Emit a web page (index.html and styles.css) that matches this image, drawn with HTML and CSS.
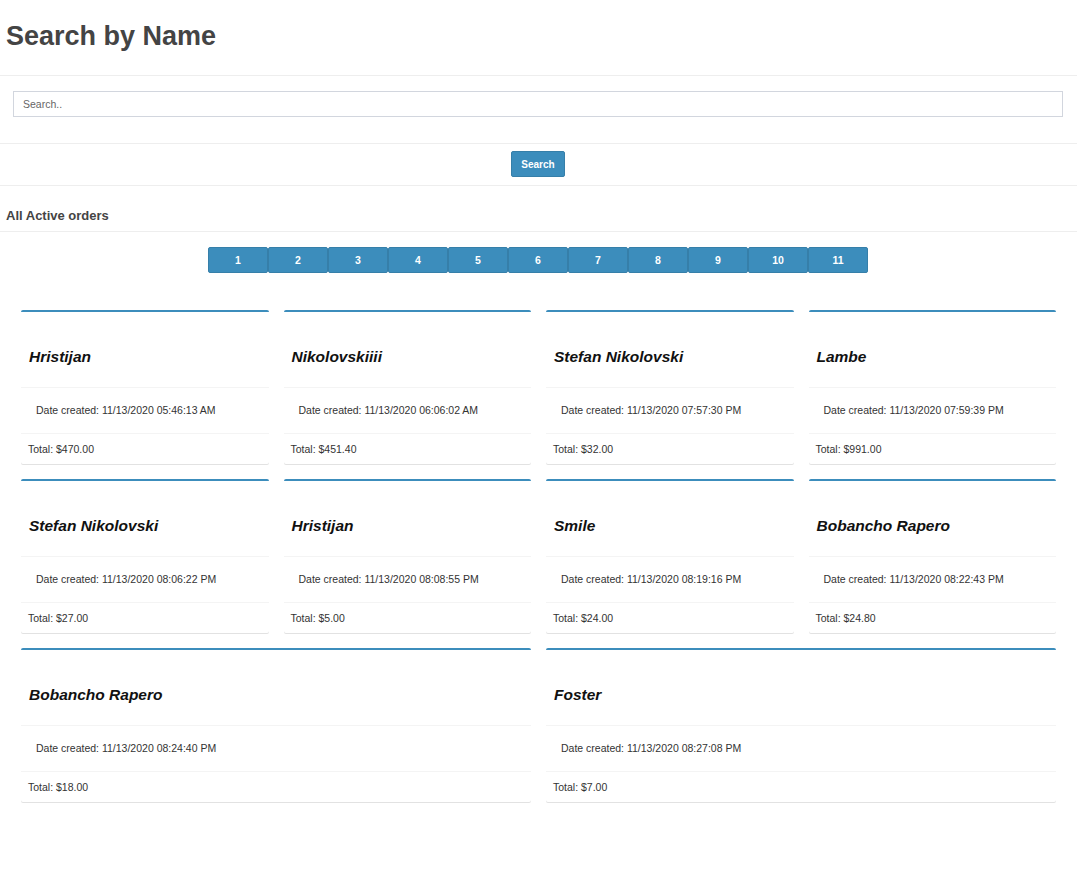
FILE: index.html
```html
<!DOCTYPE html>
<html lang="en">
<head>
<meta charset="utf-8">
<title>Search by Name</title>
<link rel="stylesheet" href="styles.css">
</head>
<body>
  <header class="page-head">
    <h1 class="page-title">Search by Name</h1>
  </header>
  <section class="search-row">
    <input class="search-input" type="text" placeholder="Search..">
  </section>
  <section class="button-row">
    <button class="btn-search" type="button">Search</button>
  </section>
  <section class="list-head">
    <h3 class="list-title">All Active orders</h3>
  </section>
  <nav class="pager">
    <button class="page-btn">1</button><button class="page-btn">2</button><button class="page-btn">3</button><button class="page-btn">4</button><button class="page-btn">5</button><button class="page-btn">6</button><button class="page-btn">7</button><button class="page-btn">8</button><button class="page-btn">9</button><button class="page-btn">10</button><button class="page-btn">11</button>
  </nav>
  <main class="cards">
    <div class="card"><div class="card-name">Hristijan</div><div class="card-date">Date created: 11/13/2020 05:46:13 AM</div><div class="card-total">Total: $470.00</div></div>
    <div class="card"><div class="card-name">Nikolovskiiii</div><div class="card-date">Date created: 11/13/2020 06:06:02 AM</div><div class="card-total">Total: $451.40</div></div>
    <div class="card"><div class="card-name">Stefan Nikolovski</div><div class="card-date">Date created: 11/13/2020 07:57:30 PM</div><div class="card-total">Total: $32.00</div></div>
    <div class="card"><div class="card-name">Lambe</div><div class="card-date">Date created: 11/13/2020 07:59:39 PM</div><div class="card-total">Total: $991.00</div></div>
    <div class="card"><div class="card-name">Stefan Nikolovski</div><div class="card-date">Date created: 11/13/2020 08:06:22 PM</div><div class="card-total">Total: $27.00</div></div>
    <div class="card"><div class="card-name">Hristijan</div><div class="card-date">Date created: 11/13/2020 08:08:55 PM</div><div class="card-total">Total: $5.00</div></div>
    <div class="card"><div class="card-name">Smile</div><div class="card-date">Date created: 11/13/2020 08:19:16 PM</div><div class="card-total">Total: $24.00</div></div>
    <div class="card"><div class="card-name">Bobancho Rapero</div><div class="card-date">Date created: 11/13/2020 08:22:43 PM</div><div class="card-total">Total: $24.80</div></div>
    <div class="card"><div class="card-name">Bobancho Rapero</div><div class="card-date">Date created: 11/13/2020 08:24:40 PM</div><div class="card-total">Total: $18.00</div></div>
    <div class="card"><div class="card-name">Foster</div><div class="card-date">Date created: 11/13/2020 08:27:08 PM</div><div class="card-total">Total: $7.00</div></div>
  </main>
</body>
</html>
```

FILE: styles.css
```css
* { box-sizing: border-box; }
html, body { margin: 0; padding: 0; background: #fff; }
body {
  font-family: "Liberation Sans", Arial, sans-serif;
  color: #333;
  font-size: 10.5px;
}

.page-head {
  padding: 20px 6px 23px;
  border-bottom: 1px solid #eee;
}
.page-title {
  margin: 0;
  font-size: 27px;
  line-height: 32px;
  font-weight: bold;
  color: #444;
}

.search-row {
  padding: 15px 14px 26px 13px;
  border-bottom: 1px solid #eee;
}
.search-input {
  display: block;
  width: 100%;
  height: 26px;
  margin: 0;
  padding: 0 9px;
  border: 1px solid #d2d6de;
  border-radius: 0;
  font-family: "Liberation Sans", Arial, sans-serif;
  font-size: 10.5px;
  color: #555;
  outline: none;
}
.search-input::placeholder { color: #666; }

.button-row {
  padding: 7px 1px 8px 0;
  text-align: center;
  border-bottom: 1px solid #eee;
}
.btn-search {
  height: 26px;
  width: 54px;
  padding: 0;
  margin: 0;
  background: #3c8dbc;
  border: 1px solid #367fa9;
  border-radius: 2px;
  color: #fff;
  font-family: "Liberation Sans", Arial, sans-serif;
  font-size: 10px;
  font-weight: bold;
}

.list-head {
  padding: 21px 6px 6px;
  border-bottom: 1px solid #eee;
}
.list-title {
  margin: 0;
  font-size: 13px;
  line-height: 18px;
  font-weight: bold;
  color: #444;
}

.pager {
  display: flex;
  justify-content: center;
  padding: 15px 1px 0 0;
  margin-bottom: 37px;
}
.page-btn {
  width: 60px;
  height: 26px;
  padding: 0;
  margin: 0;
  background: #3c8dbc;
  border: 1px solid #367fa9;
  border-radius: 2px;
  color: #fff;
  font-family: "Liberation Sans", Arial, sans-serif;
  font-size: 10.5px;
  font-weight: bold;
}

.cards {
  display: flex;
  flex-wrap: wrap;
  column-gap: 15px;
  padding: 0 21px;
}
.card {
  flex: 1 0 calc((100% - 45px) / 4);
  margin-bottom: 15px;
  border-top: 2px solid #3c8dbc;
  border-radius: 2px;
  box-shadow: 0 1px 0 #e2e2e2;
  background: #fff;
}
.card-name {
  padding: 35px 8px 20px;
  font-size: 15.5px;
  line-height: 20px;
  font-weight: bold;
  font-style: italic;
  color: #111;
  border-bottom: 1px solid #f4f4f4;
}
.card-date {
  padding: 15px 15px;
  line-height: 15px;
  color: #333;
  border-bottom: 1px solid #f4f4f4;
}
.card-total {
  padding: 8px 7px 7px;
  line-height: 15px;
  color: #333;
}
```
